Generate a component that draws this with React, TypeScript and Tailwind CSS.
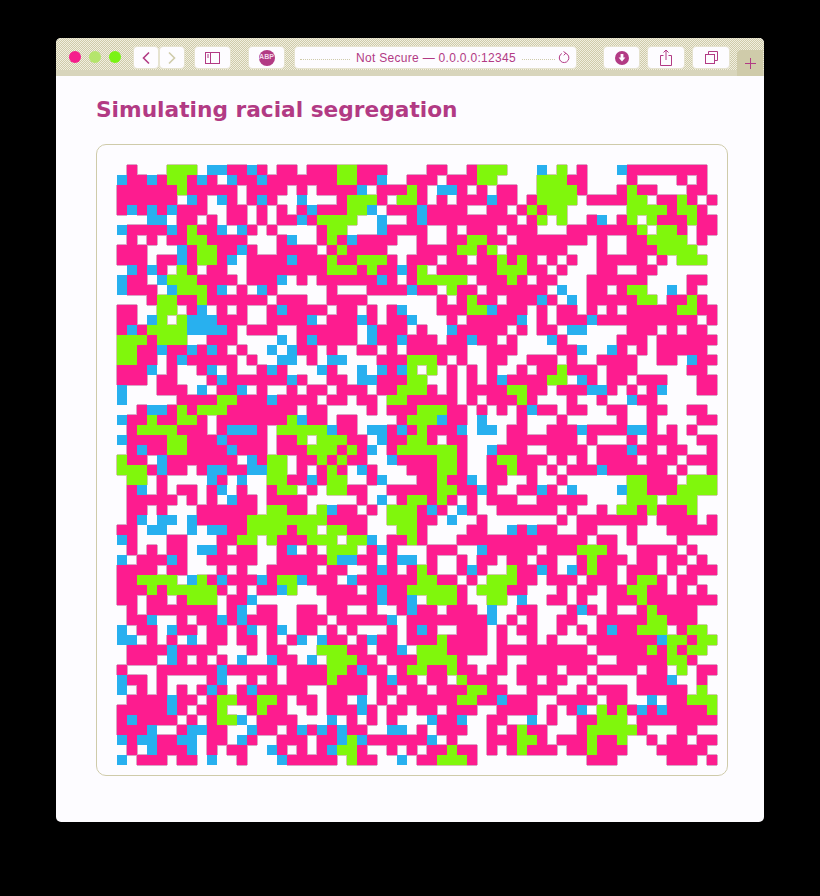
import React from 'react';

// simulation state read off the picture: . empty, p pink, b blue, g green
const grid = [
  '.p...ggg.bbppbp.pp.pppggppp...' + '.pp..pggg...b.g.p...bpppppppp.',
  'bppbpggpbp.bppbpppppppggppb..p' + 'pp.pppgg....gggpp....p....p.p.',
  'ppppppgppppp.pppp.p.ppppb.pppg' + 'p.bbp.p.pp..ggggp...pgpp...pp.',
  'pppppp.bp.bp.pbp..b...pgggp.gg' + 'p.p.pppbpp.pgggg.ppppgg.ppgp.p',
  'pbpbpbppp..pp.p.p.pbpppggb.ppp' + 'bpppp..pp.pgpgg......ggggpggp.',
  '...bb.pp.p.pp.p.ppbpgggg..b..p' + 'bppppppppp.pg.g..pb.pg.gpppgpp',
  'bppppbpgppb.bp.p....pgg...bppp' + 'p..p.ppp.ppp...pppppppg.ggp.pp',
  '.p.p.ppggpppp...pb..pgpbpppp..' + 'p..ppggpp.ppppppp.p..ppgggg.p.',
  'ppp...bpggppbp..pppp.pgpppp...' + 'ppppggpg.pppppp...p..pppgggg..',
  'ppp.ppbpggpb.ppppbpppgppgggp.p' + 'pp.pp.ppgpgp.p.p..ppppp.p.ggg.',
  '.bpbp.gp.pp..ppppppppgggpgppbp' + 'g.ppppppgggpp.p...pp..pp......',
  'bpp.bgggpppp.pppb.p.ppppppbp.p' + 'ggggg.pppgp.pp...pppppp....pp.',
  'bppp.bgggpb.p.bp.....p...ppppb' + 'pp.gpp.pppppp.b..pp.pgg..b.p..',
  '...pggppgpppppp.ppp..pppp.....' + '..p.pgpp.pppbp.b.pppppgg.ppgp.',
  'pp..gg.pb.p.p..pbpppp.pp.p.pb.' + '..pppggbppp.p.pp.p.p.pppppggpp',
  'pp.bg.gbbbppp..ppppb.pppbp.ppb' + '...p.pppppb.p.pppbpppppppppp.p',
  'pbpggggbbbbp.ppp..pppppp.bppp.' + 'p..bppppp.p.pp.bb....ppp.p.pp.',
  'gggpggg..ppp....b.pbpppp.bppbp' + 'pp.ppbpp.p...bp.....ppp.pppppp',
  'ggppbppbpbp.p..b.bpp.p..pp.p.p' + 'ppppp..ppp....ppb..bp.p.ppppp.',
  'ggpp.pbppppp.p..bb.p.bb...pppg' + 'ggp.p..pp..ppp.p..pppp..pp.bpp',
  'pppb.p..pb.p..pbp...bp..b.bpbg' + '.g.p.p.p..p.ppgppp.ppp.....pp.',
  'ppp.pp...pbppppppbp..pp.bbpppg' + 'g..p.p.pbppppgg.bp.pp.ppp...pp',
  'b...ppp.b.ppb.p..p.pp.ppp.ppgg' + 'gp.p.ppppggpp.pppbbp.p.pb...pp',
  'b.....ppppggpppbpppp.pp.pp.ggp' + 'pppp.p.pppgp...p..p..bpp......',
  '..pbbpgpgggppppppp.pp....p.ppp' + 'gggpp.p.p.pbpp.pp..pp..pp..pp.',
  'bppgppggp.pppppppgbpp.pp....pg' + 'ggbpp.b...p...p.....p..p....pp',
  '.pggggppp.pbbbp.gggggbpp.bbpbp' + 'gpppb.bb.pp..pppbppppbbp.p.p..',
  'bppppggpppbpppp.ppg.gggpp.bppg' + 'gp.pp....ppppppp.p...p.ppp..pp',
  '.pbppggppppbppp.pppgggpgpb.pgg' + 'ggggp..bppp..pppp.pppbpp.pp..p',
  'gpp.bppppppp.bpgg.ppgpgpp..bpp' + 'ppggp..pggppp.p.p.pppp.ppp.ppp',
  'gggpbpp.pbbppbbgg.p.pgp.bp...p' + 'ppggp..ppgpp.p.pppbpppppp.p..p',
  '.gg.p....bp.b..ggppbpgg..pb...' + 'ppgppb.pp..p..p......ggppp.ggg',
  '.pb.p.pp.pb.p..pgg.p.ggpp..ppp' + 'ppggppbp..ppbp.b....bggpppgggg',
  '.ppppp.p.p.bpp.pppp.....p.b.pg' + 'gpgp.p.ppp..ppppp....ggg.ggg..',
  '.pp.p...pppppp.ggpp.gbpp.p.ggg' + 'pbp.bp..pppppp.p..p.ggpgpppg..',
  '.pb.bb.bpppppggggggggpppp..ggg' + 'pp.b..p.......p.ppppppp.pppp.p',
  'pp.bb..b.bbppggggpgg.ggpp...gg' + 'p....pp..bpbpp..pp...p...ppppp',
  'bp...pp...ppgg.gpppggg.ggb.ppg' + 'p...ppppppppppppp.pp.p....p...',
  '.p.p.pp.bbp.pp..pb.p.ggg.pbp..' + '.ppp..bppppp.pppgggp..pppp.p..',
  'b.pppbp..ppppp..pppppgbbpp.pbb' + '.p..p.pp.pp.pp..pgppp.pp.pp.p.',
  'pppp.pp...p.p..ppppp.pp..pbp.p' + 'gp..pbp..gppbp.bpgpp.ppp.p.ppp',
  'ppgggg.bgpbpppbpggbppp.bpppppp' + 'ggpp.p.gggpp.ppp.ppp.pggp.pp..',
  'pppgpgggggp.p.ppbg..pppp.pbppg' + 'ggggp.gggpp...p.pp.ppggpp.p.p.',
  'pp.pp.pggg.ppb.......pppppbppb' + '.gggp..gg.b..pp.p..pppgppppppp',
  '.p.ppppppp.pb.pp..pp.pp..p..pb' + 'pp.ppp.b..pp...pbp.p..pgpppp..',
  '.ppb..p.ppbpbppp..ppp.pppppb.p' + 'pppppppb.p.p..pp..pppppggppp..',
  'b.pp.bpp.pp.pb.pb.pp.p.p...p.p' + 'bp..ppp.p.pp..p.p.pbppggg.pgg.',
  'bb.p.p.b.pp.pp.p.pb.bpp.pbpp.p' + 'ppgpppp.p..p.p...pppppppbggpgg',
  '.ppppbpppp...p.pp...gggpp.ppb.' + 'gggpppp.ppppppppp.pppppgpgpgg.',
  '.ppp.bp.p.p.b..bpp.b.gggpp.ppp' + 'ggggp...p..ppppppp..pppppggp..',
  'p...ppppppbppppp.ppppggpbpp.pg' + 'gppgpp.pp.pppp.pp.pppp.pp.g.pp',
  'bpp.p....pb..p.p.ppppgppp.pbpp' + '.pp.gppp..pp.pp..p....pppb..p.',
  'b.p.p.p.pbp.pbppppp..pppp.pp.p' + 'p.pppggpp..ppp..p.ppp.ppppp.g.',
  '.ppppbpp.pggppggp.pp.pp.b.p.pp' + 'ppppggppbppp..pppp.pp..b.ppggg',
  'pppppbp.ppg..pgpp..p.pppbp.pp.' + 'pp.ppp..pppp.p.pb.gpgpbpbppppg',
  'pbpppp.p.pggb.pppp...b.p.p.p..' + '.bppb..pp..b.p..ppggg.pppppppp',
  'pppb..pbbpp..bpp.pbpbpbpp..bb.' + 'p.ppp..p.pgpp...pgggggp...pp..',
  'bpbbppbb.pp.bp..ppp.ppbgbppppp' + 'pb.p...pppggp.pppgppg..p.pp.pp',
  '.p.bpppb.p.pp..bp.p.pbggp..p.p' + '.ppgpp.p.pgppp.ppgppp...ppppp.',
  'b.ppp.pp.b..p...bppppp.gpp..b.' + 'ppgggp...........ppp.....ppp.p',
];

const fills: Record<string, string> = { p: '#fd1c8f', b: '#28b0ef', g: '#80f70c' };

const cellAt = (x: number, y: number) => grid[y]?.[x] ?? '.';

// the gif leaves a thin fringe where a coloured block meets the white
const fringe = (kind: string) => {
  let d = '';
  grid.forEach((row, y) => {
    row.split('').forEach((c, x) => {
      if (c !== kind) return;
      const l = x * 10;
      const t = y * 10;
      if (cellAt(x, y - 1) === '.') d += `M${l} ${t - 0.5}h10`;
      if (cellAt(x, y + 1) === '.') d += `M${l} ${t + 10.5}h10`;
      if (cellAt(x - 1, y) === '.') d += `M${l - 0.5} ${t}v10`;
      if (cellAt(x + 1, y) === '.') d += `M${l + 10.5} ${t}v10`;
    });
  });
  return d;
};

const btn =
  'flex h-[23px] items-center justify-center rounded-[4px] border border-[#e6e3d0] bg-[#fdfcff]';

const Grid: React.FC = () => (
  <svg width={600} height={600} viewBox="0 0 600 600" shapeRendering="crispEdges" className="overflow-visible">
    <path d={fringe('p')} stroke="#d9a6c6" strokeWidth="1" fill="none" />
    <path d={fringe('g')} stroke="#cfcbaa" strokeWidth="1" fill="none" />
    {grid.map((row, y) =>
      row.split('').map((c, x) =>
        c === '.' ? null : <rect key={`${x}-${y}`} x={x * 10} y={y * 10} width={10} height={10} fill={fills[c]} />,
      ),
    )}
  </svg>
);

const Toolbar: React.FC = () => (
  <div className="flex h-[38px] items-start border-b-[6px] border-[#d8d5bc] bg-[repeating-conic-gradient(#cfcbaa_0_25%,#f1efe0_0_50%)] bg-size-[2px_2px]">
    {/* traffic lights */}
    <div className="mt-[13px] ml-[13px] flex gap-2">
      <span className="h-3 w-3 rounded-full bg-[#f51f8c]" />
      <span className="h-3 w-3 rounded-full bg-[#b5e56c]" />
      <span className="h-3 w-3 rounded-full bg-[#7af314]" />
    </div>

    <div className="mt-2 ml-3 flex">
      <div className={`${btn} w-[26px]`}>
        <svg width="10" height="14" viewBox="0 0 10 14" fill="none" stroke="#b23a84" strokeWidth="1.6">
          <path d="M8 1.5 2.5 7 8 12.5" />
        </svg>
      </div>
      <div className={`${btn} w-[26px]`}>
        <svg width="10" height="14" viewBox="0 0 10 14" fill="none" stroke="#cfcbaa" strokeWidth="1.6">
          <path d="M2 1.5 7.500 7 2 12.500" />
        </svg>
      </div>
    </div>

    <div className={`${btn} mt-2 ml-[9px] w-[37px]`}>
      <svg width="15" height="12" viewBox="0 0 15 12" fill="none" stroke="#b23a84" strokeWidth="1">
        <rect x="0.5" y="0.500" width="14" height="11" />
        <path d="M5.500 0.500v11M2 3h2M2 5h2" />
      </svg>
    </div>

    <div className={`${btn} mt-2 ml-[17px] w-[37px]`}>
      <div className="flex h-4 w-4 items-center justify-center rounded-full bg-[#b23a84] font-['Liberation_Sans',sans-serif] text-[7px] font-bold text-[#f1d9ea]">
        ABP
      </div>
    </div>

    <div className={`${btn} relative mt-2 ml-[9px] w-[283px] justify-start gap-[6px] pl-[5px] font-['Liberation_Sans',sans-serif] text-[12px] tracking-[0.3px] text-[#b23a84]`}>
      <span className="mt-1 w-[50px] border-t border-dotted border-[#cfcbaa]" />
      Not Secure — 0.0.0.0:12345
      <span className="mt-1 w-[33px] border-t border-dotted border-[#cfcbaa]" />
      <svg className="absolute top-[4px] right-[5px]" width="13" height="13" viewBox="0 0 13 13" fill="none" stroke="#b23a84" strokeWidth="1">
        <path d="M7.500 2.200a4.800 4.800 0 1 1-3.600.3" />
        <path d="M5.500 0.500 7.800 2.200 5.800 4.300" />
      </svg>
    </div>

    <div className={`${btn} mt-2 ml-[26px] w-[37px]`}>
      <svg width="14" height="14" viewBox="0 0 14 14">
        <circle cx="7" cy="7" r="7" fill="#b23a84" />
        <path d="M5.600 3h2.800v3.500h2L7 10.500 3.600 6.500h2z" fill="#fdfcff" />
      </svg>
    </div>

    <div className={`${btn} mt-2 ml-[7px] w-[38px]`}>
      <svg width="12" height="17" viewBox="0 0 12 17" fill="none" stroke="#b23a84" strokeWidth="1">
        <path d="M3.500 6.500H.5v10h11v-10H8.500M6 11V1M3.500 3.500 6 1l2.500 2.500" />
      </svg>
    </div>

    <div className={`${btn} mt-2 ml-[7px] w-[38px]`}>
      <svg width="13" height="13" viewBox="0 0 13 13" fill="none" stroke="#b23a84" strokeWidth="1">
        <rect x="0.500" y="3.500" width="9" height="9" />
        <path d="M3.500 3.500v-3h9v9h-3" />
      </svg>
    </div>

    <div className="mt-3 ml-[7px] flex h-[26px] w-[26px] items-center justify-center rounded-tl-[4px] bg-[#cfcbaa]">
      <svg width="11" height="11" viewBox="0 0 11 11" fill="none" stroke="#b23a84" strokeWidth="1">
        <path d="M5.500 0v11M0 5.500h11" />
      </svg>
    </div>
  </div>
);

const App: React.FC = () => {
  return (
    <div className="h-[896px] w-[820px] bg-black pt-[38px] pl-[56px]">
      <div className="h-[784px] w-[708px] overflow-hidden rounded-[5px] bg-[#fdfcff]">
        <Toolbar />
        <div className="px-10">
          <h1 className="flex h-[68px] items-center font-['DejaVu_Sans',sans-serif] text-[21.7px] font-bold text-[#b23a84]">
            Simulating racial segregation
          </h1>
          <div className="h-[632px] w-[632px] rounded-[10px] border border-[#cfcbaa] pt-5 pl-5">
            <Grid />
          </div>
        </div>
      </div>
    </div>
  );
};

export default App;
